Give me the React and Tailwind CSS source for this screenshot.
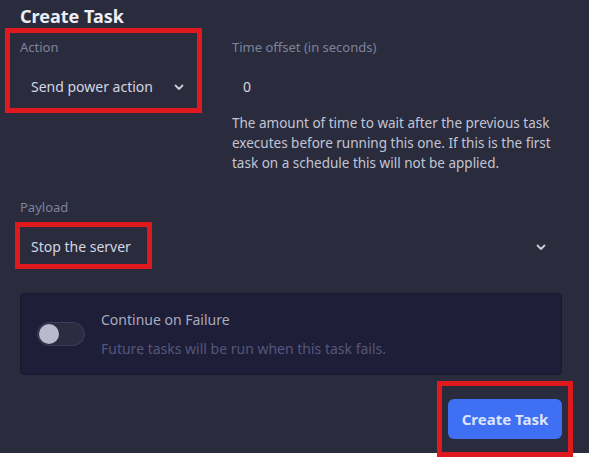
import React from "react";

function Chevron() {
	return (
		<svg width="10" height="7" viewBox="0 0 10 7" className="shrink-0">
			<polyline points="1.5,1.5 5,5 8.5,1.5" fill="none" stroke="#c9cbd8" strokeWidth="1.8" strokeLinecap="round" strokeLinejoin="round" />
		</svg>
	);
}

function Label({ children }) {
	return <div className="text-[13px] leading-5 text-[#7f8298]">{children}</div>;
}

function Select({ value, className }) {
	return (
		<div className={`mt-[10px] h-10 flex items-center justify-between pl-[11px] pr-[13px] text-sm text-[#d4d6e1] ${className}`}>
			<span>{value}</span>
			<Chevron />
		</div>
	);
}

function Marker({ className }) {
	return <div className={`absolute border-[5px] border-[#e0191e] pointer-events-none ${className}`} />;
}

export default function App() {
	return (
		<div className="relative w-[589px] h-[457px] overflow-hidden bg-white" style={{ fontFamily: '"Noto Sans", "Open Sans", sans-serif' }}>
			<div className="h-[453px] bg-[#2a2c3e] pl-5 pr-[27px] pt-[3px] flex flex-col">
				<h1 className="h-[26px] text-[18px] leading-[26px] font-bold text-[#eceef5]">Create Task</h1>

				<div className="mt-2 grid grid-cols-[212px_1fr]">
					<div>
						<Label>Action</Label>
						<Select value="Send power action" className="w-[177px]" />
					</div>
					<div>
						<Label>Time offset (in seconds)</Label>
						<div className="mt-[10px] h-10 flex items-center pl-[11px] text-sm text-[#d4d6e1]">0</div>
						<p className="mt-[6px] text-[13.5px] leading-5 text-[#c3c5d3]">
							The amount of time to wait after the previous task executes before running this one. If this is the first task on a schedule this will not be applied.
						</p>
					</div>
				</div>

				<div className="mt-6">
					<Label>Payload</Label>
					<Select value="Stop the server" className="pr-[16px]" />
				</div>

				<div className="mt-[26px] h-[82px] rounded border border-[#181830] bg-[#1e1e38] flex items-center pl-4">
					<div className="w-12 h-6 rounded-full bg-[#2b2c42] border border-[#3d3f58] flex items-center px-[1px]">
						<div className="w-5 h-5 rounded-full bg-[#b9bacb]" />
					</div>
					<div className="ml-4 flex flex-col gap-[9px]">
						<div className="text-sm leading-5 text-[#a9abbd]">Continue on Failure</div>
						<div className="text-sm leading-5 text-[#54577a]">Future tasks will be run when this task fails.</div>
					</div>
				</div>

				<div className="mt-6 flex justify-end">
					<button className="w-[114px] h-10 rounded-md bg-[#3f6ff2] text-[15px] font-bold text-[#dde5ff]">Create Task</button>
				</div>
			</div>

			<Marker className="left-[5px] top-[28px] w-[197px] h-[85px]" />
			<Marker className="left-[15px] top-[222px] w-[137px] h-[47px]" />
			<Marker className="left-[437px] top-[381px] w-[136px] h-[76px]" />
		</div>
	);
}
